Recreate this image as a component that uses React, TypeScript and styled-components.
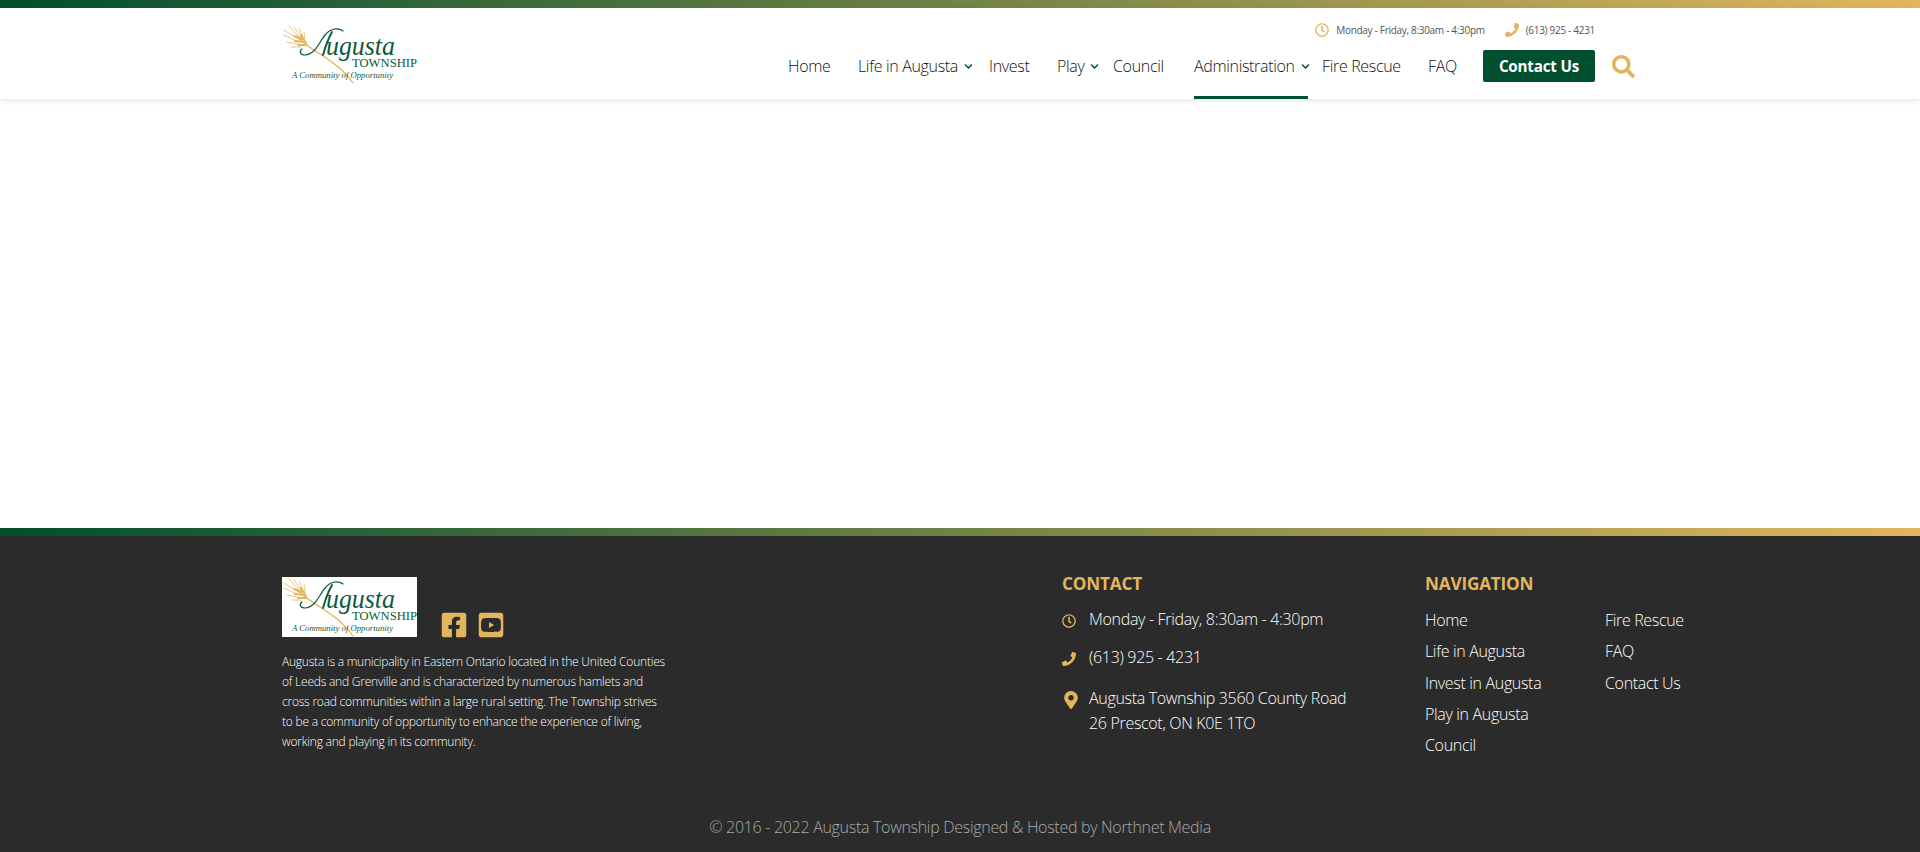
import React from "react";
import styled, { createGlobalStyle } from "styled-components";
import {
  FaRegClock,
  FaPhone,
  FaSearch,
  FaMapMarkerAlt,
  FaChevronDown,
  FaFacebookSquare,
  FaYoutubeSquare,
} from "react-icons/fa";

const GREEN = "#004f2f";
const GOLD = "#e2b65d";

const Global = createGlobalStyle`
  html, body { margin: 0; padding: 0; background: #fff; }
  body { font-family: "Open Sans", "Noto Sans", sans-serif; font-weight: 300; overflow: hidden; }
  * { box-sizing: border-box; }
  a { color: inherit; text-decoration: none; }
`;

const Page = styled.div`
  min-height: 100vh;
  display: flex;
  flex-direction: column;
`;

const GradientBar = styled.div`
  height: 8px;
  background: linear-gradient(90deg, ${GREEN} 0%, ${GOLD} 100%);
`;

const Header = styled.header`
  background: #fff;
  box-shadow: 0 2px 5px rgba(0, 0, 0, 0.1);
  position: relative;
`;

const Container = styled.div`
  width: 1356px;
  margin: 0 auto;
`;

const HeaderInner = styled(Container)`
  height: 91px;
  display: flex;
  justify-content: space-between;
  align-items: center;
`;

const LogoFrame = styled.div<{ $boxed?: boolean }>`
  width: 135px;
  height: 60px;
  background: ${(p) => (p.$boxed ? "#fff" : "transparent")};
  svg { display: block; }
`;

const HeaderRight = styled.div`
  align-self: stretch;
  display: flex;
  flex-direction: column;
  align-items: flex-end;
`;

const TopInfo = styled.div`
  height: 42px;
  padding-top: 1px;
  margin-right: 43px;
  display: flex;
  align-items: center;
  gap: 20px;
  font-size: 10px;
  font-weight: 400;
  letter-spacing: -0.3px;
  color: #555;
`;

const TopInfoItem = styled.span`
  display: flex;
  align-items: center;
  gap: 7px;
  svg { color: ${GOLD}; font-size: 14px; }
`;

const NavRow = styled.nav`
  height: 49px;
  display: flex;
  align-items: flex-start;
  margin-right: 3px;
`;

const NavItem = styled.a<{ $w: number; $active?: boolean }>`
  position: relative;
  width: ${(p) => p.$w}px;
  height: 49px;
  line-height: 32px;
  font-size: 16px;
  letter-spacing: -0.33px;
  color: #111;
  white-space: nowrap;
  display: flex;
  align-items: flex-start;
  &::after {
    content: "";
    display: ${(p) => (p.$active ? "block" : "none")};
    position: absolute;
    left: 0;
    bottom: 0;
    width: 114px;
    height: 3px;
    background: ${GREEN};
  }
`;

const Chevron = styled(FaChevronDown)`
  color: ${GREEN};
  font-size: 9px;
  margin: 12px 0 0 6px;
  flex: none;
`;

const ContactButton = styled.a`
  width: 112px;
  height: 32px;
  border-radius: 2px;
  background: ${GREEN};
  color: #fff;
  font-size: 15.2px;
  font-weight: 700;
  letter-spacing: -0.2px;
  display: flex;
  align-items: center;
  justify-content: center;
`;

const SearchButton = styled.span`
  margin-left: 17px;
  height: 32px;
  display: flex;
  align-items: center;
  color: ${GOLD};
  font-size: 23px;
`;

const Main = styled.main`
  flex: 1;
  background: #fff;
`;

const Footer = styled.footer`
  background: #2b2b2b;
  color: #fff;
`;

const FooterGrid = styled(Container)`
  display: grid;
  grid-template-columns: 780px 363px 1fr;
  padding-top: 41px;
  height: 268px;
`;

const BrandRow = styled.div`
  display: flex;
  align-items: flex-end;
  gap: 23px;
`;

const Socials = styled.div`
  display: flex;
  gap: 9px;
  color: ${GOLD};
  font-size: 28px;
  line-height: 0;
  margin-bottom: -2px;
`;

const About = styled.p`
  margin: 15px 0 0;
  width: 400px;
  font-size: 12px;
  line-height: 20px;
  letter-spacing: -0.22px;
  font-weight: 300;
  color: #fff;
`;

const FooterTitle = styled.h4`
  margin: -5px 0 0;
  font-size: 17.2px;
  line-height: 24px;
  font-weight: 700;
  letter-spacing: -0.2px;
  color: ${GOLD};
`;

const ContactList = styled.ul`
  list-style: none;
  margin: 11px 0 0;
  padding: 0;
  display: flex;
  flex-direction: column;
`;

const ContactRow = styled.li<{ $mt?: number }>`
  display: flex;
  align-items: flex-start;
  margin-top: ${(p) => p.$mt ?? 0}px;
  font-size: 16px;
  line-height: 25px;
  letter-spacing: -0.32px;
`;

const ContactIcon = styled.span`
  width: 27px;
  flex: none;
  color: ${GOLD};
  font-size: 14px;
  display: flex;
  align-items: center;
  height: 25px;
  padding-top: 2px;
`;

const PinIcon = styled(ContactIcon)`
  font-size: 18px;
`;

const NavColumns = styled.div`
  display: grid;
  grid-template-columns: 180px 1fr;
  margin-top: 9px;
`;

const NavList = styled.ul`
  list-style: none;
  margin: 0;
  padding: 0;
  li {
    font-size: 16px;
    line-height: 31.3px;
    letter-spacing: -0.33px;
    white-space: nowrap;
  }
`;

const Copyright = styled.div`
  height: 48px;
  text-align: center;
  font-size: 16px;
  line-height: 46px;
  letter-spacing: -0.3px;
  color: #aaa;
`;

const Logo = ({ boxed }: { boxed?: boolean }) => (
  <LogoFrame $boxed={boxed}>
    <svg width="135" height="60" viewBox="0 0 135 60">
      <g stroke={GOLD} fill="none" strokeLinecap="round">
        <path d="M15 13 C30 28 55 36 71 59" strokeWidth="1.3" />
        <path d="M17 15 L1.5 6 M18 14 L7 2 M19 13 L12 3 M21 13 L17 4.5 M23 15 L22 8 M15 17 L1.5 11 M16 20 L5 18 M19 23 L10 23" strokeWidth="0.8" />
        <path d="M12 12 L20 15 M13 17 L21 18 M16 21 L24 21 M19 11 L24 19" strokeWidth="2" />
      </g>
      <g stroke="#0d5a3a" fill="none" strokeLinecap="round">
        <path d="M61 7 C55 3 48 5 43 11 C37 18 34 30 23 31 C18 31 17 27 20 25" strokeWidth="1.2" />
        <path d="M50 8 C46 15 43 24 41 31" strokeWidth="1.9" />
      </g>
      <g fill="#0d5a3a" stroke="none">
        <text x="44" y="31" fontFamily="'Liberation Serif', serif" fontStyle="italic" fontSize="27" textLength="69" lengthAdjust="spacingAndGlyphs">ugusta</text>
        <text x="70" y="43" fontFamily="'Liberation Serif', serif" fontSize="12.5" textLength="65" lengthAdjust="spacingAndGlyphs">TOWNSHIP</text>
        <text x="10" y="54" fontFamily="'Liberation Serif', serif" fontStyle="italic" fontSize="8.5" textLength="101" lengthAdjust="spacingAndGlyphs">A Community of Opportunity</text>
      </g>
    </svg>
  </LogoFrame>
);

export default function App() {
  return (
    <Page>
      <Global />
      <GradientBar />
      <Header>
        <HeaderInner>
          <Logo />
          <HeaderRight>
            <TopInfo>
              <TopInfoItem><FaRegClock />Monday - Friday, 8:30am - 4:30pm</TopInfoItem>
              <TopInfoItem><FaPhone />(613) 925 - 4231</TopInfoItem>
            </TopInfo>
            <NavRow>
              <NavItem $w={70}>Home</NavItem>
              <NavItem $w={131}>Life in Augusta<Chevron /></NavItem>
              <NavItem $w={68}>Invest</NavItem>
              <NavItem $w={56}>Play<Chevron /></NavItem>
              <NavItem $w={81}>Council</NavItem>
              <NavItem $w={128} $active>Administration<Chevron /></NavItem>
              <NavItem $w={106}>Fire Rescue</NavItem>
              <NavItem $w={55}>FAQ</NavItem>
              <ContactButton>Contact Us</ContactButton>
              <SearchButton><FaSearch /></SearchButton>
            </NavRow>
          </HeaderRight>
        </HeaderInner>
      </Header>
      <Main />
      <GradientBar />
      <Footer>
        <FooterGrid>
          <div>
            <BrandRow>
              <Logo boxed />
              <Socials><FaFacebookSquare /><FaYoutubeSquare /></Socials>
            </BrandRow>
            <About>
              Augusta is a municipality in Eastern Ontario located in the United Counties<br />
              of Leeds and Grenville and is characterized by numerous hamlets and<br />
              cross road communities within a large rural setting. The Township strives<br />
              to be a community of opportunity to enhance the experience of living,<br />
              working and playing in its community.
            </About>
          </div>
          <div>
            <FooterTitle>CONTACT</FooterTitle>
            <ContactList>
              <ContactRow><ContactIcon><FaRegClock /></ContactIcon>Monday - Friday, 8:30am - 4:30pm</ContactRow>
              <ContactRow $mt={13}><ContactIcon><FaPhone /></ContactIcon>(613) 925 - 4231</ContactRow>
              <ContactRow $mt={16}><PinIcon><FaMapMarkerAlt /></PinIcon><span>Augusta Township 3560 County Road<br />26 Prescot, ON K0E 1TO</span></ContactRow>
            </ContactList>
          </div>
          <div>
            <FooterTitle>NAVIGATION</FooterTitle>
            <NavColumns>
              <NavList>
                <li>Home</li>
                <li>Life in Augusta</li>
                <li>Invest in Augusta</li>
                <li>Play in Augusta</li>
                <li>Council</li>
              </NavList>
              <NavList>
                <li>Fire Rescue</li>
                <li>FAQ</li>
                <li>Contact Us</li>
              </NavList>
            </NavColumns>
          </div>
        </FooterGrid>
        <Copyright>© 2016 - 2022 Augusta Township Designed &amp; Hosted by Northnet Media</Copyright>
      </Footer>
    </Page>
  );
}
